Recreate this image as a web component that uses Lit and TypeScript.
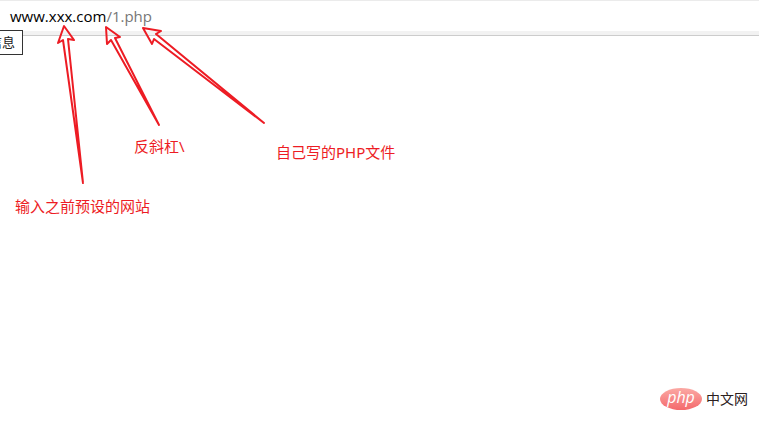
import { LitElement, html, css, svg } from "lit";
import { customElement } from "lit/decorators.js";

interface Arrow {
  points: string;
}

const ARROWS: Arrow[] = [
  { points: "64,26 58,43 63,40 83,183 68,39 74,40" },
  { points: "106,27 107,44 111,40 159,125 115,38 120,37" },
  { points: "143,28 152,44 154,39 264,123 156,34 161,31" },
];

@customElement("app-root")
export class AppRoot extends LitElement {
  static styles = css`
    :host {
      display: flex;
      flex-direction: column;
      position: relative;
      min-height: 100vh;
      overflow: hidden;
      background: #fff;
      font-family: "Noto Sans", "Noto Sans CJK SC", sans-serif;
    }
    .bar {
      border-top: 1px solid #ebebeb;
      border-bottom: 1px solid #ccc;
      background: #f2f2f2;
      padding-bottom: 4px;
    }
    .address {
      background: #fff;
      padding: 0 10px;
      font-family: "Open Sans", sans-serif;
      font-size: 15px;
      line-height: 30px;
      color: #000;
    }
    .path {
      color: #777;
    }
    .tip {
      position: absolute;
      top: 30px;
      left: 0;
      display: flex;
      justify-content: flex-end;
      box-sizing: border-box;
      width: 23px;
      padding-right: 7px;
      border: 1px solid #333;
      border-left: 0;
      background: #fff;
      overflow: hidden;
      white-space: nowrap;
      font-size: 13px;
      line-height: 23px;
      color: #222;
    }
    .arrows {
      position: absolute;
      top: 0;
      left: 0;
      width: 280px;
      height: 200px;
      fill: none;
      stroke: #ed1c24;
      stroke-width: 2;
      stroke-linejoin: round;
    }
    .note {
      position: absolute;
      margin: 0;
      font-size: 15px;
      line-height: 20px;
      white-space: nowrap;
      color: #ed1c24;
    }
    .site {
      top: 196px;
      left: 15px;
    }
    .slash {
      top: 136px;
      left: 134px;
    }
    .file {
      top: 142px;
      left: 276px;
    }
    .brand {
      display: flex;
      align-items: center;
      gap: 4px;
      margin-top: auto;
      align-self: flex-end;
      padding: 0 11px 22px 0;
      font-size: 14px;
      line-height: 22px;
      color: #2b2020;
    }
    .mark {
      display: block;
      width: 42px;
      height: 22px;
    }
    .php {
      font: italic 500 16px "Open Sans", sans-serif;
      fill: #fff;
    }
  `;

  render() {
    return html`
      <header class="bar">
        <div class="address">www.xxx.com<span class="path">/1.php</span></div>
      </header>
      <div class="tip">信息</div>
      <svg class="arrows" viewBox="0 0 280 200" aria-hidden="true">
        ${ARROWS.map((a) => svg`<polygon points=${a.points} />`)}
      </svg>
      <p class="note site">输入之前预设的网站</p>
      <p class="note slash">反斜杠\\</p>
      <p class="note file">自己写的PHP文件</p>
      <footer class="brand">
        <svg class="mark" viewBox="0 0 42 22" aria-hidden="true">
          <defs>
            <linearGradient id="glow" x1="0" y1="0" x2="0" y2="1">
              <stop offset="0" stop-color="#fba9a4" />
              <stop offset="1" stop-color="#f4696c" />
            </linearGradient>
          </defs>
          <ellipse cx="21" cy="11" rx="21" ry="11" fill="url(#glow)" />
          <text class="php" x="21" y="15" text-anchor="middle">php</text>
        </svg>
        <span>中文网</span>
      </footer>
    `;
  }
}
